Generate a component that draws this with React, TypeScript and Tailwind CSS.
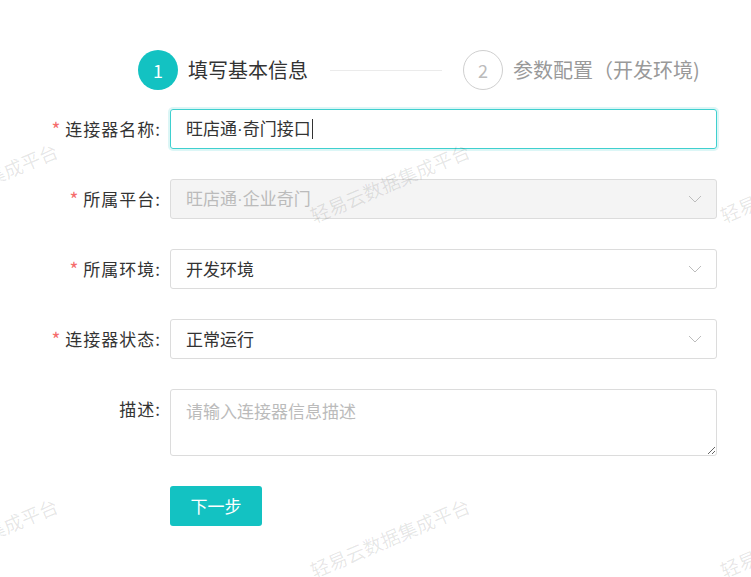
import React from 'react'

const font = { fontFamily: '"Noto Sans CJK SC", "Noto Sans", sans-serif' }

function Chevron() {
  return (
    <svg width="14" height="8" viewBox="0 0 14 8" fill="none" className="shrink-0">
      <polyline points="1,1 7,7 13,1" stroke="#bdbdbd" strokeWidth="1" />
    </svg>
  )
}

function Dot() {
  return <span style={{ fontFamily: '"Liberation Sans", sans-serif' }}>·</span>
}

function Row({ label, required, children }: { label: string; required?: boolean; children: React.ReactNode }) {
  return (
    <div className="flex items-start">
      <div className="flex h-10 w-[170px] shrink-0 items-center justify-end pr-[9px] text-[17px] tracking-[1px] text-[#333]">
        {required && <span className="mr-[4px] text-[19px] text-[#f56c6c]">*</span>}
        {label}
      </div>
      {children}
    </div>
  )
}

function Select({ children, disabled }: { children: React.ReactNode; disabled?: boolean }) {
  return (
    <div
      className={
        disabled
          ? 'flex h-10 w-[547px] items-center justify-between rounded-[3px] border border-[#dcdcdc] bg-[#f4f4f4] pl-[15px] pr-[14px] text-[17px] text-[#bbb]'
          : 'flex h-10 w-[547px] items-center justify-between rounded-[3px] border border-[#dcdcdc] bg-white pl-[15px] pr-[14px] text-[17px] text-[#333]'
      }
    >
      <span>{children}</span>
      <Chevron />
    </div>
  )
}

const marks = [
  { x: -22, y: 183 },
  { x: 390, y: 183 },
  { x: 800, y: 183 },
  { x: -22, y: 538 },
  { x: 390, y: 538 },
  { x: 800, y: 538 },
]

export default function App() {
  return (
    <div className="relative h-[577px] w-[751px] overflow-hidden bg-white" style={font}>
      {/* steps */}
      <div className="flex items-center pl-[138px] pt-[50px]">
        <div className="flex h-10 w-10 items-center justify-center rounded-full bg-[#13c2c2] text-[18px] text-white">1</div>
        <div className="ml-[10px] text-[20px] text-[#333]">填写基本信息</div>
        <div className="ml-[22px] h-px w-[112px] bg-[#ebebeb]" />
        <div className="ml-[21px] flex h-10 w-10 items-center justify-center rounded-full border border-[#cfcfcf] text-[18px] text-[#bbb]">2</div>
        <div className="ml-[10px] text-[20px] text-[#999]">参数配置（开发环境)</div>
      </div>

      {/* form */}
      <div className="mt-[19px] flex flex-col gap-[30px]">
        <Row label="连接器名称:" required>
          <div className="flex h-10 w-[547px] items-center rounded-[3px] border border-[#3fd0cf] pl-[15px] text-[17px] text-[#333] shadow-[0_0_0_2px_rgba(19,194,194,0.15)]">
            <span>
              旺店通<Dot />奇门接口
            </span>
            <span className="ml-px h-[20px] w-px bg-[#333]" />
          </div>
        </Row>
        <Row label="所属平台:" required>
          <Select disabled>
            旺店通<Dot />企业奇门
          </Select>
        </Row>
        <Row label="所属环境:" required>
          <Select>开发环境</Select>
        </Row>
        <Row label="连接器状态:" required>
          <Select>正常运行</Select>
        </Row>
        <Row label="描述:">
          <textarea
            placeholder="请输入连接器信息描述"
            className="h-[67px] w-[547px] rounded-[3px] border border-[#dcdcdc] px-[15px] py-[9px] text-[17px] leading-6 text-[#333] outline-none placeholder:text-[#bbb]"
            style={font}
          />
        </Row>
        <div className="pl-[170px]">
          <button className="h-10 w-[92px] rounded-[3px] bg-[#13c2c2] text-[17px] text-white">下一步</button>
        </div>
      </div>

      {/* watermark */}
      {marks.map((m, i) => (
        <div
          key={i}
          className="pointer-events-none absolute whitespace-nowrap text-[19px] text-black/[0.1]"
          style={{ left: m.x, top: m.y, transform: 'translate(-50%, -50%) rotate(-23deg)' }}
        >
          轻易云数据集成平台
        </div>
      ))}
    </div>
  )
}
